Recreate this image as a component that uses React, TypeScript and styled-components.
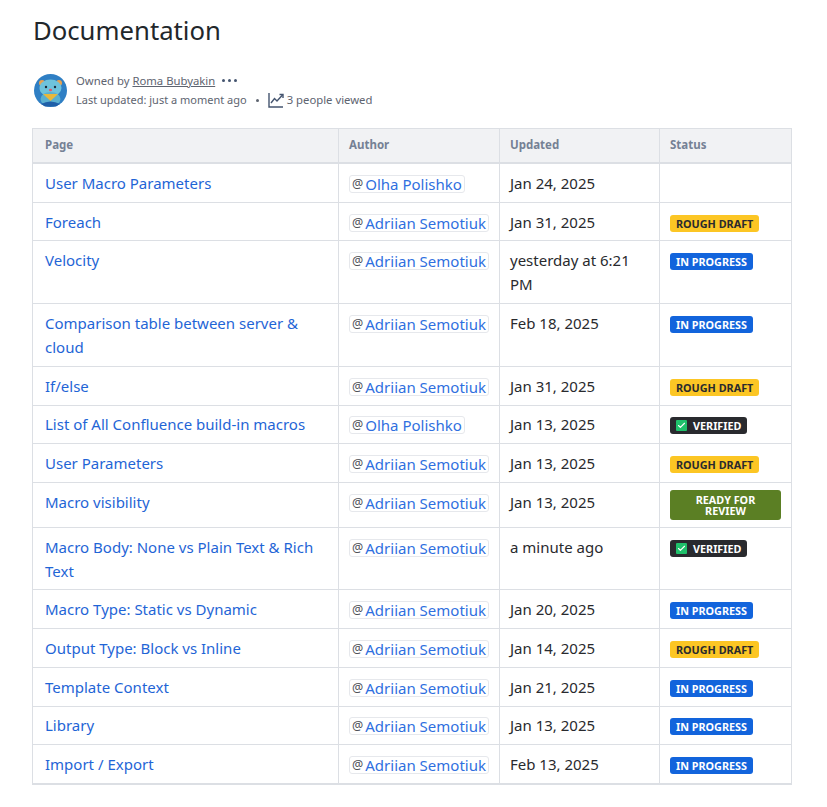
import styled, { createGlobalStyle } from "styled-components";
import { Check } from "lucide-react";

const GlobalStyle = createGlobalStyle`
  body {
    margin: 0;
    background: #ffffff;
    font-family: "Noto Sans", "Open Sans", sans-serif;
    color: #292a2e;
  }
`

const Page = styled.div`
  width: 759px;
  padding: 14px 0 0 32px;
`

const Title = styled.h1`
  margin: 0 0 23px 1px;
  font-size: 25.7px;
  line-height: 34px;
  font-weight: 400;
  color: #22272b;
`

const Byline = styled.div`
  display: flex;
  align-items: center;
  gap: 9px;
  margin: 0 0 19px 2px;
`

const Avatar = styled.svg`
  width: 33px;
  height: 33px;
  flex: none;
`

const BylineText = styled.div`
  font-size: 11.3px;
  line-height: 19px;
  color: #5e6470;
`

const BylineRow = styled.div`
  display: flex;
  align-items: center;
`

const Owner = styled.span`
  margin-left: 3px;
  text-decoration: underline;
`

const Updated = styled.span`
  font-size: 11px;
`

const Dots = styled.span`
  display: flex;
  gap: 3px;
  margin-left: 7px;
  span {
    width: 3px;
    height: 3px;
    border-radius: 50%;
    background: #44546f;
  }
`

const Bullet = styled.span`
  width: 3px;
  height: 3px;
  border-radius: 50%;
  background: #5e6470;
  margin: 1px 9px 0 9px;
`

const ChartIcon = styled.svg`
  width: 16px;
  height: 16px;
  margin-right: 3px;
`

const Table = styled.table`
  width: 759px;
  table-layout: fixed;
  border-collapse: collapse;
  border: 1px solid #dcdfe4;
  border-bottom-width: 2px;
`

const HeadCell = styled.th`
  height: 31px;
  padding: 0 10px 2px;
  background: #f1f2f4;
  border: 1px solid #dcdfe4;
  border-bottom-width: 2px;
  text-align: left;
  font-size: 11.5px;
  font-weight: 700;
  color: #758195;
  &:first-child {
    padding-left: 12px;
  }
`

const Cell = styled.td`
  padding: 6.87px 10px;
  border: 1px solid #dcdfe4;
  font-size: 15px;
  line-height: 24px;
  vertical-align: top;
  color: #292a2e;
  &:first-child {
    padding-left: 12px;
  }
`

const PageLink = styled.a`
  color: #1f65d6;
`

const Mention = styled.span`
  display: inline-flex;
  align-items: center;
  height: 16px;
  padding: 0 2px 0 2px;
  border: 1px solid #e6e8ec;
  border-radius: 3px;
  color: #2f6fe0;
  white-space: nowrap;
  vertical-align: 1px;
  &::before {
    content: "@";
    font-size: 12.5px;
    color: #505258;
    margin-right: 2px;
  }
`

const badgeColors = {
  draft: { bg: "#fcc624", fg: "#292a2e" },
  progress: { bg: "#1264dc", fg: "#ffffff" },
  verified: { bg: "#292a2e", fg: "#ffffff" },
  review: { bg: "#5b7f24", fg: "#ffffff" },
}

type BadgeKind = keyof typeof badgeColors

const Badge = styled.span<{ $kind: BadgeKind }>`
  display: ${props => props.$kind === "review" ? "block" : "inline-flex"};
  align-items: center;
  margin-top: ${props => props.$kind === "review" ? "0" : "4px"};
  padding: ${props => props.$kind === "review" ? "4px 20px" : "0 6px"};
  min-height: 17px;
  border-radius: 3px;
  background: ${props => badgeColors[props.$kind].bg};
  color: ${props => badgeColors[props.$kind].fg};
  font-size: 10.8px;
  line-height: ${props => props.$kind === "review" ? "11px" : "17px"};
  font-weight: 700;
  text-align: center;
  white-space: ${props => props.$kind === "review" ? "normal" : "nowrap"};
`

const CheckBox = styled.span`
  display: inline-flex;
  align-items: center;
  justify-content: center;
  width: 11px;
  height: 11px;
  margin-right: 6px;
  border-radius: 1px;
  background: #1fc16b;
  color: #ffffff;
`

const COLUMNS = [
  { label: "Page", width: 306 },
  { label: "Author", width: 161 },
  { label: "Updated", width: 160 },
  { label: "Status", width: 132 },
]

const LABELS: Record<BadgeKind, string> = {
  draft: "ROUGH DRAFT",
  progress: "IN PROGRESS",
  verified: "VERIFIED",
  review: "READY FOR REVIEW",
}

const OLHA = "Olha Polishko"
const ADRIIAN = "Adriian Semotiuk"

const rows: { page: string; author: string; updated: string; status?: BadgeKind }[] = [
  { page: "User Macro Parameters", author: OLHA, updated: "Jan 24, 2025" },
  { page: "Foreach", author: ADRIIAN, updated: "Jan 31, 2025", status: "draft" },
  { page: "Velocity", author: ADRIIAN, updated: "yesterday at 6:21 PM", status: "progress" },
  { page: "Comparison table between server & cloud", author: ADRIIAN, updated: "Feb 18, 2025", status: "progress" },
  { page: "If/else", author: ADRIIAN, updated: "Jan 31, 2025", status: "draft" },
  { page: "List of All Confluence build-in macros", author: OLHA, updated: "Jan 13, 2025", status: "verified" },
  { page: "User Parameters", author: ADRIIAN, updated: "Jan 13, 2025", status: "draft" },
  { page: "Macro visibility", author: ADRIIAN, updated: "Jan 13, 2025", status: "review" },
  { page: "Macro Body: None vs Plain Text & Rich Text", author: ADRIIAN, updated: "a minute ago", status: "verified" },
  { page: "Macro Type: Static vs Dynamic", author: ADRIIAN, updated: "Jan 20, 2025", status: "progress" },
  { page: "Output Type: Block vs Inline", author: ADRIIAN, updated: "Jan 14, 2025", status: "draft" },
  { page: "Template Context", author: ADRIIAN, updated: "Jan 21, 2025", status: "progress" },
  { page: "Library", author: ADRIIAN, updated: "Jan 13, 2025", status: "progress" },
  { page: "Import / Export", author: ADRIIAN, updated: "Feb 13, 2025", status: "progress" },
]

function App() {
  return (
    <Page>
      <GlobalStyle />
      <Title>Documentation</Title>
      <Byline>
        <Avatar viewBox="0 0 33 33">
          <circle cx="16.5" cy="16.5" r="16.5" fill="#2f7fc4" />
          <circle cx="8" cy="9" r="3" fill="#e9a24f" />
          <circle cx="25" cy="9" r="3" fill="#e9a24f" />
          <ellipse cx="16.5" cy="14" rx="11" ry="8.5" fill="#6ec3dc" />
          <ellipse cx="16.5" cy="25" rx="10" ry="7" fill="#5ab0d0" />
          <path d="M9 20 L24 20 L16.5 27 Z" fill="#e8b83c" />
          <circle cx="12" cy="13" r="1.2" fill="#1d2b3a" />
          <circle cx="21" cy="13" r="1.2" fill="#1d2b3a" />
          <ellipse cx="16.5" cy="16" rx="1.6" ry="1.3" fill="#e4596b" />
          <path d="M7 30 Q16.5 25 26 30 L22 32.5 L11 32.5 Z" fill="#1f5fa8" />
        </Avatar>
        <BylineText>
          <BylineRow>
            Owned by <Owner>Roma Bubyakin</Owner>
            <Dots><span /><span /><span /></Dots>
          </BylineRow>
          <BylineRow>
            <Updated>Last updated: just a moment ago</Updated>
            <Bullet />
            <ChartIcon viewBox="0 0 16 16" fill="none" stroke="#44546f" strokeWidth="1.4">
              <path d="M1 1 V15 H15" />
              <path d="M3 11 L6.5 6.5 L9 9 L14.5 3" />
              <path d="M11.5 2.5 H15 V6" />
            </ChartIcon>
            3 people viewed
          </BylineRow>
        </BylineText>
      </Byline>
      <Table>
        <colgroup>
          {COLUMNS.map((col) => <col key={col.label} style={{ width: col.width }} />)}
        </colgroup>
        <thead>
          <tr>
            {COLUMNS.map((col) => <HeadCell key={col.label}>{col.label}</HeadCell>)}
          </tr>
        </thead>
        <tbody>
          {rows.map((row) => (
            <tr key={row.page}>
              <Cell><PageLink>{row.page}</PageLink></Cell>
              <Cell><Mention>{row.author}</Mention></Cell>
              <Cell>{row.updated}</Cell>
              <Cell>
                {row.status && (
                  <Badge $kind={row.status}>
                    {row.status === "verified" && (
                      <CheckBox><Check size={9} strokeWidth={3} /></CheckBox>
                    )}
                    {LABELS[row.status]}
                  </Badge>
                )}
              </Cell>
            </tr>
          ))}
        </tbody>
      </Table>
    </Page>
  );
}

export default App;
